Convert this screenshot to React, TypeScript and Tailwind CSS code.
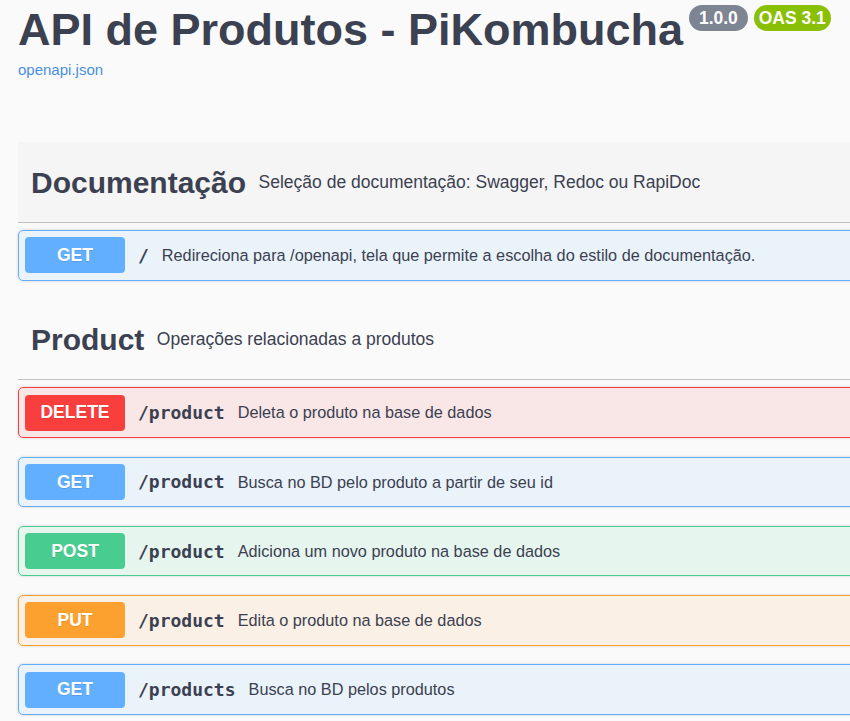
type Method = "GET" | "POST" | "PUT" | "DELETE";

const methodStyles: Record<Method, { row: string; badge: string }> = {
  GET: { row: "border-[#61affe] bg-[#61affe]/10", badge: "bg-[#61affe]" },
  POST: { row: "border-[#49cc90] bg-[#49cc90]/10", badge: "bg-[#49cc90]" },
  PUT: { row: "border-[#fca130] bg-[#fca130]/10", badge: "bg-[#fca130]" },
  DELETE: { row: "border-[#f93e3e] bg-[#f93e3e]/10", badge: "bg-[#f93e3e]" },
};

type Op = { method: Method; path: string; summary: string };

const sections: { name: string; description: string; hover?: boolean; ops: Op[] }[] = [
  {
    name: "Documentação",
    description: "Seleção de documentação: Swagger, Redoc ou RapiDoc",
    hover: true,
    ops: [
      {
        method: "GET",
        path: "/",
        summary:
          "Redireciona para /openapi, tela que permite a escolha do estilo de documentação.",
      },
    ],
  },
  {
    name: "Product",
    description: "Operações relacionadas a produtos",
    ops: [
      { method: "DELETE", path: "/product", summary: "Deleta o produto na base de dados" },
      { method: "GET", path: "/product", summary: "Busca no BD pelo produto a partir de seu id" },
      { method: "POST", path: "/product", summary: "Adiciona um novo produto na base de dados" },
      { method: "PUT", path: "/product", summary: "Edita o produto na base de dados" },
      { method: "GET", path: "/products", summary: "Busca no BD pelos produtos" },
    ],
  },
];

function OpBlock({ op }: { op: Op }) {
  const s = methodStyles[op.method];
  return (
    <div
      className={`mb-[18.75px] flex items-center rounded-[5px] border px-[6px] py-[6.25px] shadow-[0_0_3px_rgba(0,0,0,0.19)] ${s.row}`}
    >
      <span
        className={`flex h-[36px] w-[100px] shrink-0 items-center justify-center rounded-[4px] text-[17.5px] font-bold text-white [text-shadow:0_1px_0_rgba(0,0,0,0.1)] ${s.badge}`}
      >
        {op.method}
      </span>
      <span className="px-[13px] font-['DejaVu_Sans_Mono',monospace] text-[18px] font-bold text-[#3b4151]">
        {op.path}
      </span>
      <span className="text-[16.25px] text-[#3b4151]">{op.summary}</span>
    </div>
  );
}

export default function App() {
  return (
    <div className="min-h-screen w-full overflow-hidden bg-[#fafafa] font-['Liberation_Sans',Arial,sans-serif] text-[#3b4151]">
      <div className="ml-[18px] w-[1100px] pt-[5px]">
        <div className="flex items-start">
          <h2 className="text-[45px] leading-[50px] font-bold">API de Produtos - PiKombucha</h2>
          <span className="ml-[6px] flex h-[26px] items-center whitespace-pre rounded-full bg-[#7d8492] px-[5px] text-[17.5px] font-bold text-white">
            {" 1.0.0 "}
          </span>
          <span className="ml-[6px] flex h-[26px] items-center rounded-full bg-[#89bf04] px-[5px] text-[17.5px] font-bold text-white">
            OAS 3.1
          </span>
        </div>
        <a href="#" className="mt-[6px] block text-[15px] leading-[17px] text-[#4990e2]">
          openapi.json
        </a>

        <div className="mt-[64px]">
          {sections.map((sec) => (
            <section key={sec.name}>
              <div
                className={`mb-[7px] flex h-[81px] items-center border-b border-[#3b4151]/30 pl-[13px] ${
                  sec.hover ? "bg-[#f5f5f5]" : ""
                }`}
              >
                <h3 className="text-[30px] font-bold">{sec.name}</h3>
                <small className="ml-[12.5px] text-[17.5px]">{sec.description}</small>
              </div>
              {sec.ops.map((op, i) => (
                <OpBlock key={i} op={op} />
              ))}
            </section>
          ))}
        </div>
      </div>
    </div>
  );
}
